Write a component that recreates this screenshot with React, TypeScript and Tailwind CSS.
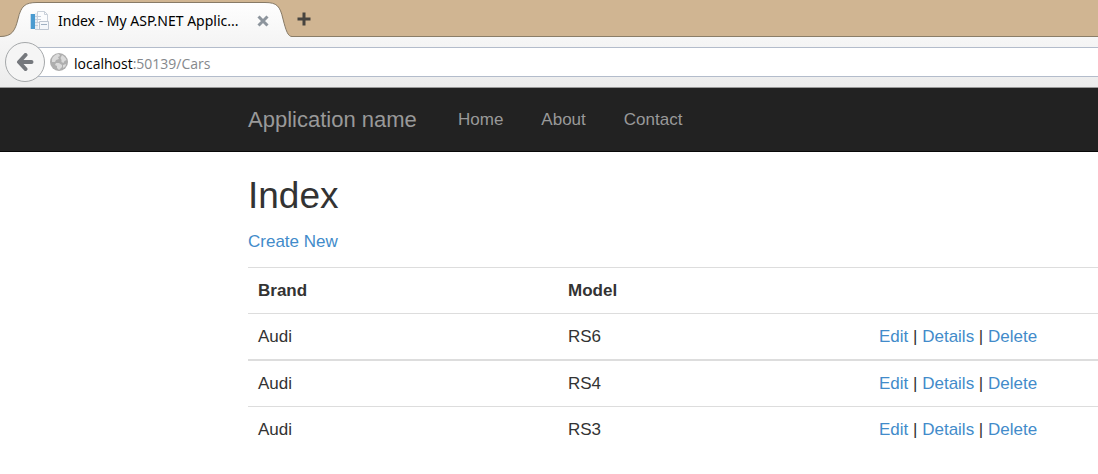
import { Fragment } from "react";

const cars = [
  { id: 1, brand: "Audi", model: "RS6" },
  { id: 2, brand: "Audi", model: "RS4" },
  { id: 3, brand: "Audi", model: "RS3" },
];

const navLinks = ["Home", "About", "Contact"];
const rowActions = ["Edit", "Details", "Delete"];

function PageIcon() {
  return (
    <svg width="20" height="20" viewBox="0 0 20 20" aria-hidden="true" className="shrink-0">
      <rect x="1" y="3" width="4" height="15" fill="#4a9bd0" />
      <rect x="0" y="3" width="1" height="15" fill="#c3dcee" />
      <path d="M5 2h3v16h-3z" fill="#e6edf4" />
      <path d="M7.500 .5h7l3 3v8h-10z" fill="#fbfcfd" stroke="#c9d0d9" />
      <path d="M14.500 .5v3h3" fill="none" stroke="#c9d0d9" />
      <path d="M5 5.500h6M5 8.500h6M5 11.500h3M5 14.500h3" stroke="#c5cedb" />
      <path d="M5 18.500h5" stroke="#c3ccd6" />
      <path d="M9.500 10.500h9v8h-9z" fill="#f4f7fa" stroke="#bcc5d0" />
      <path d="M11 13.500h6" stroke="#9fb0c2" />
    </svg>
  );
}

function GlobeIcon() {
  return (
    <svg width="18" height="18" viewBox="0 0 18 18" aria-hidden="true" className="shrink-0">
      <circle cx="9" cy="9" r="9" fill="#aeaeae" />
      <path
        d="M2 6C3 3 6 1 9 1l1 2-2 1 1 2-3 1-1 2-3 0zM12 2c2 1 4 3 4.500 5l-2 1-1 2-2-1 0-2-1-2zM6 10l3 0 3 2 0 2-3 3-2-2 0-2-2-1zM13 12l3-1c0 2-1 3-3 4z"
        fill="#dadada"
      />
    </svg>
  );
}

function BrowserTab() {
  return (
    <div className="relative flex h-[37px] w-[292px] items-center">
      <svg width="292" height="37" viewBox="0 0 292 37" aria-hidden="true" className="absolute inset-0">
        <defs>
          <linearGradient id="tab-fill" x1="0" y1="0" x2="0" y2="1">
            <stop offset="0" stopColor="#fefefe" />
            <stop offset="1" stopColor="#f6f6f6" />
          </linearGradient>
        </defs>
        <path d="M0 36.500C12 36.500 15 31 18 19C21 6 25 2.500 37 2.500H265C277 2.500 280 6 283 19C286 31 288 36.500 292 36.500V37H0z" fill="url(#tab-fill)" />
        <path d="M0 36.500C12 36.500 15 31 18 19C21 6 25 2.500 37 2.500H265C277 2.500 280 6 283 19C286 31 288 36.500 292 36.500" fill="none" stroke="#877a66" />
      </svg>
      <div className="relative flex w-full items-center pt-1 pl-[30px]">
        <PageIcon />
        <span className="ml-2 w-[199px] whitespace-nowrap font-['Noto_Sans','Open_Sans',sans-serif] text-[14px] leading-5 text-black">
          Index - My ASP.NET Applic...
        </span>
        <button aria-label="Close tab">
          <svg width="12" height="12" viewBox="0 0 12 12" className="block">
            <path d="M1.500 1.500l9 9M10.500 1.500l-9 9" stroke="#8d959d" strokeWidth="3" />
          </svg>
        </button>
      </div>
    </div>
  );
}

function BrowserChrome() {
  return (
    <header className="font-['Open_Sans','Noto_Sans',sans-serif]">
      <div className="flex h-[37px] border-b border-[#8a7d68] bg-[#d0b592]">
        <BrowserTab />
        <button aria-label="New tab" className="ml-1 h-[38px] px-px">
          <svg width="14" height="14" viewBox="0 0 14 14" className="block">
            <path d="M7 .5v13M.5 7h13" stroke="#47443f" strokeWidth="3" />
          </svg>
        </button>
      </div>
      <div className="flex h-[51px] items-center border-b border-[#999] bg-linear-to-b from-[#f6f6f6] to-[#ececec] pl-[5px]">
        <button
          aria-label="Back"
          className="z-10 flex size-10 shrink-0 items-center justify-center rounded-full border border-[#a5a8aa] bg-[#f5f5f5]"
        >
          <svg width="18" height="18" viewBox="0 0 18 18">
            <path
              d="M9.500 2L3 9l6.500 7M4 9h11.500"
              fill="none"
              stroke="#75787d"
              strokeWidth="4"
              strokeLinecap="round"
              strokeLinejoin="round"
            />
          </svg>
        </button>
        <div className="-ml-3 flex h-[30px] flex-1 items-center border-y border-[#b3bccb] bg-white pl-[17px]">
          <GlobeIcon />
          <a href="#cars" className="ml-[6px] pt-[3px] text-[14px] leading-5 text-[#85888c]">
            <span className="text-black">localhost</span>:50139/Cars
          </a>
        </div>
      </div>
    </header>
  );
}

function Navbar() {
  return (
    <nav className="flex h-16 items-center border-b border-[#080808] bg-[#222] pl-[248px] text-[#999]">
      <a href="#app" className="mr-[19px] w-[172px] whitespace-nowrap text-[22px] leading-[25px]">
        Application name
      </a>
      {navLinks.map((label) => (
        <a key={label} href={`#${label.toLowerCase()}`} className="px-[19px] leading-[25px]">
          {label}
        </a>
      ))}
    </nav>
  );
}

function CarsTable() {
  return (
    <table className="w-full table-fixed border-separate border-spacing-0 text-left">
      <colgroup>
        <col className="w-[310px]" />
        <col className="w-[311px]" />
        <col />
      </colgroup>
      <thead>
        <tr>
          <th className="border-t border-[#ddd] p-[10px] font-bold">Brand</th>
          <th className="border-t border-[#ddd] p-[10px] font-bold">Model</th>
          <th className="border-t border-[#ddd] p-[10px]"></th>
        </tr>
      </thead>
      <tbody className="[&_td]:border-t [&_td]:border-[#ddd] [&_td]:p-[10px] [&_tr:nth-child(2)_td]:border-t-2">
        {cars.map((car) => (
          <tr key={car.id}>
            <td>{car.brand}</td>
            <td>{car.model}</td>
            <td>
              {rowActions.map((action, i) => (
                <Fragment key={action}>
                  {i > 0 && " | "}
                  <a href={`#${action.toLowerCase()}-${car.id}`} className="text-[#428bca]">
                    {action}
                  </a>
                </Fragment>
              ))}
            </td>
          </tr>
        ))}
      </tbody>
    </table>
  );
}

export default function App() {
  return (
    <div className="min-h-screen overflow-x-hidden bg-white font-['Liberation_Sans',Arial,sans-serif] text-[17px] leading-[25px] text-[#333]">
      <BrowserChrome />
      <Navbar />
      <main className="pt-[23px] pl-[248px]">
        <h2 className="text-[37px] leading-[42px]">Index</h2>
        <p className="mt-3 mb-[13px]">
          <a href="#create" className="text-[#428bca]">
            Create New
          </a>
        </p>
        <CarsTable />
      </main>
    </div>
  );
}
